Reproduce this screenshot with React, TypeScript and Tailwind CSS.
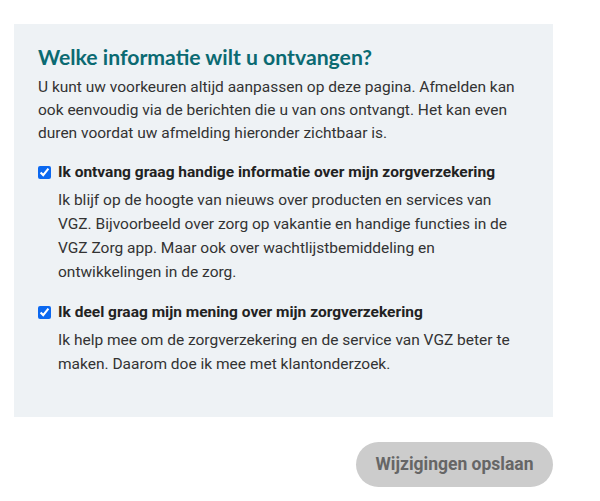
import React from 'react';

const items = [
  {
    label: 'Ik ontvang graag handige informatie over mijn zorgverzekering',
    text: 'Ik blijf op de hoogte van nieuws over producten en services van VGZ. Bijvoorbeeld over zorg op vakantie en handige functies in de VGZ Zorg app. Maar ook over wachtlijstbemiddeling en ontwikkelingen in de zorg.',
  },
  {
    label: 'Ik deel graag mijn mening over mijn zorgverzekering',
    text: 'Ik help mee om de zorgverzekering en de service van VGZ beter te maken. Daarom doe ik mee met klantonderzoek.',
  },
];

export default function App() {
  return (
    <div className="bg-white w-[600px] h-[501px] pt-6 pl-[14px]" style={{ fontFamily: 'Roboto, "Liberation Sans", sans-serif' }}>
      <div className="w-[539px] h-[393px] bg-[#eef2f5] px-6 pt-[19px]">
        <h2 className="text-[21.2px] leading-7 font-bold text-[#0b6a72]" style={{ fontFamily: 'Lato, "Noto Sans", sans-serif' }}>
          Welke informatie wilt u ontvangen?
        </h2>
        <p className="mt-[5px] text-[15.5px] leading-[23px] text-[#333]">
          U kunt uw voorkeuren altijd aanpassen op deze pagina. Afmelden kan ook eenvoudig via de berichten die u van ons ontvangt. Het kan even duren voordat uw afmelding hieronder zichtbaar is.
        </p>
        <div className="mt-[15px] flex flex-col gap-[16px]">
          {items.map((item) => (
            <div key={item.label}>
              <label className="flex items-center gap-[7px] text-[15.5px] leading-6 font-bold text-[#222]">
                <input type="checkbox" defaultChecked className="w-[13px] h-[13px] m-0 accent-[#0b68f0]" />
                <span>{item.label}</span>
              </label>
              <p className="mt-[4px] pl-[20px] pr-[10px] text-[15.5px] leading-6 text-[#333]">{item.text}</p>
            </div>
          ))}
        </div>
      </div>
      <div className="w-[539px] flex justify-end mt-[25px]">
        <button className="w-[197px] h-[45px] rounded-full bg-[#cccccc] text-[#666] text-[17.5px] font-bold">
          Wijzigingen opslaan
        </button>
      </div>
    </div>
  );
}
